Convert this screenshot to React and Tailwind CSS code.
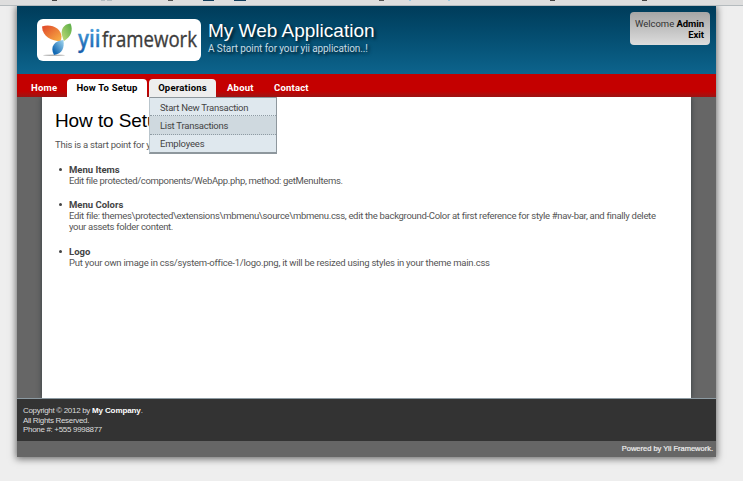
const items = [
  {
    title: "Menu Items",
    lines: [{ text: "Edit file protected/components/WebApp.php, method: getMenuItems.", className: "tracking-[-0.32px]" }],
  },
  {
    title: "Menu Colors",
    lines: [
      {
        text: "Edit file: themes\\protected\\extensions\\mbmenu\\source\\mbmenu.css, edit the background-Color at first reference for style #nav-bar, and finally delete",
        className: "tracking-[-0.3px]",
      },
      { text: "your assets folder content.", className: "tracking-[-0.32px]" },
    ],
  },
  {
    title: "Logo",
    lines: [
      {
        text: "Put your own image in css/system-office-1/logo.png, it will be resized using styles in your theme main.css",
        className: "tracking-[-0.235px]",
      },
    ],
  },
];

function Logo() {
  return (
    <svg width="164" height="42" viewBox="0 0 164 42" className="block shrink-0">
      <defs>
        <linearGradient id="orange" x1="0" y1="0" x2="1" y2="1">
          <stop offset="0.1" stopColor="#e2502c" />
          <stop offset="1" stopColor="#f9b545" />
        </linearGradient>
        <linearGradient id="green" x1="1" y1="0" x2="0" y2="1">
          <stop offset="0" stopColor="#55ab43" />
          <stop offset="1" stopColor="#c4dc7a" />
        </linearGradient>
        <linearGradient id="blue" x1="0" y1="1" x2="1" y2="0">
          <stop offset="0.2" stopColor="#1268b3" />
          <stop offset="1" stopColor="#a5d8f0" />
        </linearGradient>
        <linearGradient id="yii" x1="0" y1="0" x2="0" y2="1">
          <stop offset="0.1" stopColor="#4aa5e0" />
          <stop offset="1" stopColor="#1559a8" />
        </linearGradient>
      </defs>
      <rect width="164" height="42" rx="6" fill="#fff" />
      <ellipse cx="17" cy="36.3" rx="11" ry="0.8" fill="#b5b5b5" />
      <path d="M5 7.5C14 4.500 24 9 24.500 17.500Q24.500 20.500 23.500 22.500C15 21.500 5.500 18.500 5 7.500Z" fill="url(#orange)" />
      <path d="M33.500 4.500C26.500 5 23 11 25.500 18Q26 20 27 22C34 18 36.500 11 33.500 4.500Z" fill="url(#green)" />
      <path d="M26.500 21C17.500 21.500 12.500 28 17 36C25.500 34.500 27.500 29 26.500 21Z" fill="url(#blue)" />
      <text x="41" y="28" fontSize="23" fontWeight="600" textLength="22.5" lengthAdjust="spacingAndGlyphs" fill="url(#yii)" stroke="url(#yii)" strokeWidth="0.3" className="font-['Open_Sans',sans-serif]">yii</text>
      <text x="65" y="28" fontSize="22" textLength="95" lengthAdjust="spacingAndGlyphs" fill="#3c3c3c" stroke="#3c3c3c" strokeWidth="0.35" className="font-['Open_Sans',sans-serif]">framework</text>
    </svg>
  );
}

function BrowserEdge() {
  const marks = [
    [52, 5, "#444"], [101, 4, "#b4bcc0"], [107, 5, "#b4bcc0"], [168, 5, "#555"],
    [203, 11, "#123c5a"], [234, 12, "#123c5a"], [379, 5, "#555"], [409, 2, "#9cc8de"],
    [448, 2, "#9cc8de"], [550, 5, "#444"], [642, 5, "#444"],
  ];
  return (
    <svg width="743" height="6" className="block">
      <rect width="743" height="5" fill="#dedede" />
      <rect y="5" width="743" height="1" fill="#b5bbbe" />
      {marks.map(([x, w, c]) => (
        <rect key={x} x={x} width={w} height="1" fill={c} />
      ))}
    </svg>
  );
}

export default function App() {
  return (
    <div className="h-[481px] w-[743px] overflow-hidden bg-[#eeeeee] font-['Liberation_Sans',Arial,sans-serif] text-[#555]">
      <BrowserEdge />
      <div className="ml-[17px] flex h-[451px] w-[699px] flex-col bg-[#666] shadow-[0_1px_7px_1px_rgba(0,0,0,0.55)]">
        <header className="flex h-[68px] shrink-0 bg-linear-to-b from-[#003c5a] to-[#0d648d] pl-5 pt-[13px]">
          <Logo />
          <div className="ml-[7px] whitespace-nowrap [text-shadow:2px_2px_3px_rgba(0,0,0,0.7)]">
            <h1 className="text-[19px] leading-[23px] text-white">My Web Application</h1>
            <p className="font-['Roboto',sans-serif] text-[10px] leading-[13px] tracking-[-0.1px] text-[#c5dce6]">A Start point for your yii application..!</p>
          </div>
          <div className="-mt-[7px] ml-auto mr-[6px] h-[33px] w-[80px] rounded-[4px] bg-linear-to-b from-[#a6a6a6] to-[#dddddd] pr-[6px] pt-[6px] text-right font-['Roboto',sans-serif] text-[9.5px] leading-[11px] tracking-[-0.05px] whitespace-nowrap text-[#333]">
            Welcome <b className="text-black">Admin</b>
            <br />
            <b className="text-black">Exit</b>
          </div>
        </header>
        <nav className="relative z-10 flex h-[23px] shrink-0 items-end bg-linear-to-b from-[#c40000] from-75% to-[#9c1212] font-['Roboto',sans-serif] text-[9.5px] leading-[18px] font-bold tracking-[0.2px] whitespace-nowrap text-white">
          <a className="ml-[14px] h-[18px] w-[36px]">Home</a>
          <a className="h-[18px] w-[80px] rounded-t-[4px] bg-white text-center text-black">How To Setup</a>
          <div className="relative ml-[2px] h-[18px] w-[67px] rounded-t-[4px] bg-[#eeeeee] text-center text-black">
            Operations
            <div className="absolute top-[18px] left-0 z-10 w-[128px] border border-b-2 border-[#8e979d] border-l-[#b9c5cc] bg-[#dfe8ee] text-left text-[9.5px] leading-[19px] font-normal text-[#444]">
              <div className="h-[18px] border-b border-dotted border-[#8e9ba3] pl-[10px] tracking-[-0.27px]">Start New Transaction</div>
              <div className="h-[19px] border-b border-dotted border-[#8e9ba3] bg-[#cfd9df] pl-[10px] tracking-[-0.25px]">List Transactions</div>
              <div className="h-[17px] pl-[10px] leading-[18px] tracking-[-0.2px]">Employees</div>
            </div>
          </div>
          <a className="ml-[11px] h-[18px] w-[47px]">About</a>
          <a className="h-[18px]">Contact</a>
        </nav>
        <main className="mx-[25px] h-[301px] shrink-0 bg-white px-[13px] pt-[12px] font-['Roboto',sans-serif] text-[9.5px] leading-[11px] shadow-[0_0_5px_rgba(40,50,55,0.8)]">
          <h2 className="font-['Liberation_Sans',Arial,sans-serif] text-[19px] leading-[24px] tracking-[-0.1px] text-black">How to Setup</h2>
          <p className="mt-[6px] tracking-[-0.25px]">This is a start point for your</p>
          <ul className="mt-[13.5px] flex flex-col gap-[13.5px]">
            {items.map((item) => (
              <li key={item.title} className="flex">
                <span className="mt-[4px] ml-[4px] mr-[7px] size-[3px] shrink-0 rounded-full bg-[#444]" />
                <div className="whitespace-nowrap">
                  <b className="block text-[#444]">{item.title}</b>
                  {item.lines.map((line) => (
                    <div key={line.text} className={line.className}>{line.text}</div>
                  ))}
                </div>
              </li>
            ))}
          </ul>
        </main>
        <footer className="h-[43px] shrink-0 border-t border-[#8c9aa2] bg-[#333] pl-[6px] pt-[7px] text-[8px] leading-[9.5px] tracking-[-0.32px] text-[#ddd]">
          <p>Copyright © 2012 by <b className="tracking-[-0.1px] text-white">My Company</b>.</p>
          <p>All Rights Reserved.</p>
          <p>Phone #: +555 9998877</p>
        </footer>
        <div className="pr-[3px] text-right text-[7.5px] leading-[16px] text-[#eee] [-webkit-text-stroke:0.2px_#eee]">Powered by Yii Framework.</div>
      </div>
    </div>
  );
}
